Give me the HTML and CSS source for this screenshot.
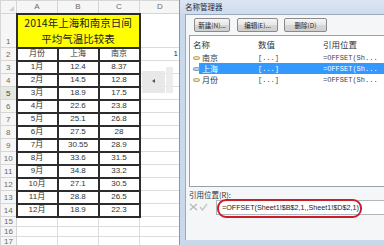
FILE: index.html
```html
<!DOCTYPE html>
<html lang="zh-CN">
<head>
<meta charset="utf-8">
<title>名称管理器</title>
<link rel="stylesheet" href="styles.css">
</head>
<body>
<div class="screen">
  <div class="sheet">
    <table class="grid">
      <colgroup><col class="c-rh"><col class="c-col"><col class="c-col"><col class="c-col"><col class="c-d"></colgroup>
      <tr class="hdr"><th class="corner"><span class="tri"></span></th><th>A</th><th>B</th><th>C</th><th>D</th></tr>
      <tr class="r-title"><th class="rh">1</th><td class="t title" colspan="3">2014年上海和南京日间<br>平均气温比较表</td><td></td></tr>
      <tr class="r"><th class="rh">2</th><td class="t">月份</td><td class="t">上海</td><td class="t">南京</td><td class="num">1</td></tr>
      <tr class="r"><th class="rh">3</th><td class="t">1月</td><td class="t">12.4</td><td class="t">8.37</td><td></td></tr>
      <tr class="r"><th class="rh">4</th><td class="t">2月</td><td class="t">14.5</td><td class="t">12.8</td><td></td></tr>
      <tr class="r"><th class="rh active">5</th><td class="t">3月</td><td class="t">18.9</td><td class="t">17.5</td><td></td></tr>
      <tr class="r"><th class="rh">6</th><td class="t">4月</td><td class="t">22.6</td><td class="t">23.8</td><td></td></tr>
      <tr class="r"><th class="rh">7</th><td class="t">5月</td><td class="t">25.1</td><td class="t">26.8</td><td></td></tr>
      <tr class="r"><th class="rh">8</th><td class="t">6月</td><td class="t">27.5</td><td class="t">28</td><td></td></tr>
      <tr class="r"><th class="rh">9</th><td class="t">7月</td><td class="t">30.55</td><td class="t">28.9</td><td></td></tr>
      <tr class="r"><th class="rh">10</th><td class="t">8月</td><td class="t">33.6</td><td class="t">31.5</td><td></td></tr>
      <tr class="r"><th class="rh">11</th><td class="t">9月</td><td class="t">34.8</td><td class="t">33.2</td><td></td></tr>
      <tr class="r"><th class="rh">12</th><td class="t">10月</td><td class="t">27.1</td><td class="t">30.5</td><td></td></tr>
      <tr class="r"><th class="rh">13</th><td class="t">11月</td><td class="t">28.8</td><td class="t">26.5</td><td></td></tr>
      <tr class="r"><th class="rh">14</th><td class="t">12月</td><td class="t">18.9</td><td class="t">22.3</td><td></td></tr>
      <tr class="e"><th class="rh">15</th><td></td><td></td><td></td><td></td></tr>
      <tr class="e"><th class="rh">16</th><td></td><td></td><td></td><td></td></tr>
      <tr class="e"><th class="rh">17</th><td></td><td></td><td></td><td></td></tr>
    </table>
    <div class="spin">
      <div class="spin-btn"><span class="arrow"></span></div>
      <div class="spin-track"></div>
    </div>
  </div>

  <div class="dlg">
    <div class="titlebar">名称管理器</div>
    <div class="body">
      <div class="btns">
        <button class="btn b1">新建(N)...</button>
        <button class="btn b2">编辑(E)...</button>
        <button class="btn b3">删除(D)</button>
      </div>
      <div class="list">
        <div class="lrow lhead"><span class="cn">名称</span><span class="cv">数值</span><span class="cr">引用位置</span></div>
        <div class="lrow"><span class="cn"><i class="tag"></i><span class="nm">南京</span></span><span class="cv mono">[...]</span><span class="cr mono">=OFFSET(Sh...</span></div>
        <div class="lrow sel"><span class="cn"><i class="tag blue"></i><span class="nm">上海</span></span><span class="cv mono">[...]</span><span class="cr mono">=OFFSET(Sh...</span></div>
        <div class="lrow"><span class="cn"><i class="tag"></i><span class="nm">月份</span></span><span class="cv mono">[...]</span><span class="cr mono">=OFFSET(Sh...</span></div>
      </div>
      <div class="reflabel">引用位置(R):</div>
      <div class="refrow">
        <svg class="ico" width="9" height="8" viewBox="0 0 9 8"><path d="M1 1 L8 7 M8 1 L1 7" stroke="#b8b8b8" stroke-width="1.3" fill="none"/></svg>
        <svg class="ico" width="9" height="8" viewBox="0 0 9 8"><path d="M1 4 L3.5 7 L8 1" stroke="#c4c4c4" stroke-width="1.3" fill="none"/></svg>
        <div class="input"><span class="formula">=OFFSET(Sheet1!$B$2,1,,Sheet1!$D$2,1)</span><span class="ring"></span></div>
      </div>
    </div>
    <div class="bottomframe"></div>
  </div>
</div>
</body>
</html>
```

FILE: styles.css
```css
* { box-sizing: border-box; }
html, body { margin: 0; padding: 0; }
body {
  width: 384px;
  height: 245px;
  overflow: hidden;
  background: #fff;
  font-family: "Noto Sans CJK SC", "Liberation Sans", sans-serif;
}
.screen {
  display: flex;
  width: 384px;
  height: 245px;
}
.sheet {
  position: relative;
  width: 179px;
  flex: none;
  overflow: hidden;
}
.grid {
  border-collapse: collapse;
  table-layout: fixed;
  width: 179px;
}
.c-rh { width: 16px; }
.c-col { width: 41px; }
.c-d { width: 41px; }
.grid th, .grid td {
  padding: 0;
  border: 1px solid #dcdcdc;
  text-align: center;
  font-weight: normal;
  line-height: 10px;
  overflow: hidden;
  white-space: nowrap;
}
.grid td {
  font-family: "Liberation Sans", "Noto Sans CJK SC", sans-serif;
  font-size: 8px;
  color: #333;
}
.hdr { height: 13px; }
.hdr th {
  background: #f6f6f6;
  color: #6a6a6a;
  font-size: 8px;
  font-family: "Liberation Sans", sans-serif;
  border-color: #d6d6d6;
}
.corner { position: relative; }
.tri {
  position: absolute;
  right: 2px;
  bottom: 2px;
  width: 0; height: 0;
  border-left: 5px solid transparent;
  border-bottom: 5px solid #d0d0d0;
}
.rh {
  background: #f6f6f6;
  color: #6a6a6a;
  font-size: 8px;
  font-family: "Liberation Sans", sans-serif;
  border-color: #d6d6d6 !important;
  vertical-align: bottom;
}
.rh.active { background: #e4e8de; color: #3f4a3a; }
.r-title { height: 34px; }
.r { height: 13px; }
.e { height: 10px; }
.e th { line-height: 9px; }
.grid td.t { border: 2px solid #2c2c2c; }
.grid td.title {
  background: #ffff00;
  font-family: "Noto Sans CJK SC", sans-serif;
  font-size: 10.5px;
  line-height: 16px;
  color: #222;
}
.grid td.num { text-align: right; padding-right: 2px; }

.spin {
  position: absolute;
  left: 142px;
  top: 67px;
  display: flex;
  align-items: flex-end;
}
.spin-btn {
  width: 23px;
  height: 22px;
  background: #e8e8e8;
  display: flex;
  justify-content: center;
  padding-top: 8px;
}
.arrow {
  width: 0; height: 0;
  border-top: 2px solid transparent;
  border-bottom: 2px solid transparent;
  border-right: 3px solid #555;
}
.spin-track {
  width: 7px;
  height: 26px;
  background: #ececec;
  margin-left: 1px;
}

/* dialog */
.dlg {
  flex: 1;
  display: flex;
  flex-direction: column;
  border-left: 1px solid #8796ab;
  background: #c9d8ea;
  padding-left: 5px;
  min-width: 0;
}
.titlebar {
  height: 14px;
  font-size: 7.5px;
  line-height: 13px;
  color: #1e2a3a;
  background: linear-gradient(#dbe6f2, #cfdcec);
  margin-left: -5px;
  padding-left: 5px;
}
.body {
  flex: 1;
  background: #f5f6f8;
  border-left: 1px solid #9aa9bd;
  border-top: 1px solid #9aa9bd;
  padding: 3px 0 0 3px;
  display: flex;
  flex-direction: column;
  min-width: 0;
}
.btns {
  display: flex;
  padding-left: 5px;
  height: 14px;
}
.btn {
  height: 14px;
  margin: 0;
  padding: 0;
  font-family: "Noto Sans CJK SC", sans-serif;
  font-size: 6.5px;
  line-height: 12px;
  color: #222;
  border: 1px solid #8a8a8a;
  border-radius: 2px;
  background: linear-gradient(#f6f6f6, #e6e6e6 50%, #d8d8d8 51%, #cfcfcf);
}
.b1 { width: 36px; }
.b2 { width: 41px; margin-left: 7px; }
.b3 { width: 43px; margin-left: 6px; }
.list {
  margin-top: 3px;
  height: 152px;
  background: #fff;
  border: 1px solid #9a9fa8;
  border-right: none;
}
.lrow {
  display: flex;
  height: 11px;
  align-items: center;
  font-size: 8px;
  color: #333;
  white-space: nowrap;
}
.lhead { height: 15px; margin-bottom: 1px; font-size: 8.5px; color: #333; }
.cn { width: 68px; padding-left: 3px; display: flex; align-items: center; }
.cv { width: 65px; }
.cr { flex: 1; }
.mono { font-family: "Liberation Mono", monospace; font-size: 7px; color: #444; }
.tag {
  display: inline-block;
  width: 7px;
  height: 4px;
  border-radius: 50%;
  background: #f2e7b0;
  border: 1px solid #bca96a;
  margin-right: 1px;
}
.tag.blue { background: #c7dcf2; border-color: #7e9cc0; }
.nm { padding: 0 1px; }
.sel { background: linear-gradient(to right, transparent 9px, #3399ff 9px); }
.sel .cn, .sel .cv, .sel .cr { color: #fff; }
.reflabel {
  margin-top: 3px;
  font-size: 7.5px;
  line-height: 9px;
  color: #333;
}
.refrow {
  display: flex;
  align-items: center;
  height: 16px;
}
.ico { margin-right: 1px; }
.input {
  position: relative;
  margin-left: 7px;
  flex: 1;
  height: 15px;
  background: #fff;
  border: 1px solid #b3b6bb;
  border-right: none;
  display: flex;
  align-items: center;
  padding-left: 5px;
}
.formula {
  font-family: "Liberation Sans", sans-serif;
  font-size: 7.2px;
  color: #222;
  white-space: nowrap;
}
.ring {
  position: absolute;
  left: 0;
  top: -2px;
  width: 145px;
  height: 19px;
  border: 2px solid #c8202a;
  border-radius: 9px;
}
.bottomframe {
  height: 5px;
  background: #c9d8ea;
  margin-left: -5px;
}
```
